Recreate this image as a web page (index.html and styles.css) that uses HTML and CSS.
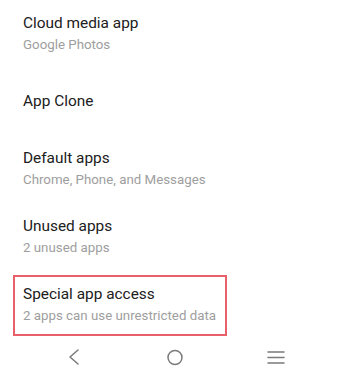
FILE: index.html
```html
<!DOCTYPE html>
<html>
<head>
<meta charset="utf-8">
<link rel="stylesheet" href="styles.css">
</head>
<body>
<div class="screen">
  <div class="list">
    <div class="item two first">
      <div class="title">Cloud media app</div>
      <div class="sub">Google Photos</div>
    </div>
    <div class="item one">
      <div class="title">App Clone</div>
    </div>
    <div class="item two">
      <div class="title">Default apps</div>
      <div class="sub">Chrome, Phone, and Messages</div>
    </div>
    <div class="item two">
      <div class="title">Unused apps</div>
      <div class="sub">2 unused apps</div>
    </div>
    <div class="item two marked">
      <div class="title">Special app access</div>
      <div class="sub">2 apps can use unrestricted data</div>
      <div class="highlight"></div>
    </div>
  </div>
  <div class="navbar">
    <svg class="nav-icon" width="20" height="20" viewBox="0 0 20 20"><polyline points="14,3 6,10 14,17" fill="none" stroke="#7a7a7a" stroke-width="1.5" stroke-linecap="round" stroke-linejoin="round"/></svg>
    <svg class="nav-icon" width="20" height="20" viewBox="0 0 20 20"><circle cx="10" cy="10.5" r="7" fill="none" stroke="#7a7a7a" stroke-width="1.5"/></svg>
    <svg class="nav-icon" width="20" height="20" viewBox="0 0 20 20"><g stroke="#7a7a7a" stroke-width="1.5" stroke-linecap="round"><line x1="2" y1="5" x2="18" y2="5"/><line x1="2" y1="10.5" x2="18" y2="10.5"/><line x1="2" y1="16" x2="18" y2="16"/></g></svg>
  </div>
</div>
</body>
</html>
```

FILE: styles.css
```css
html, body {
  margin: 0;
  padding: 0;
  background: #ffffff;
}
body {
  font-family: Roboto, "Noto Sans", "Liberation Sans", sans-serif;
  width: 350px;
  height: 374px;
  overflow: hidden;
}
.screen {
  display: flex;
  flex-direction: column;
}
.list {
  display: flex;
  flex-direction: column;
  margin-top: -1px;
}
.item {
  position: relative;
  padding: 0 23px;
  box-sizing: border-box;
  display: flex;
  flex-direction: column;
  justify-content: center;
}
.item.two {
  height: 68px;
}
.item.one {
  height: 67px;
}
.title {
  font-size: 15.4px;
  line-height: 22px;
  color: #202020;
}
.sub {
  font-size: 13.3px;
  line-height: 20px;
  margin-top: 1px;
  color: #9e9e9e;
}
.highlight {
  position: absolute;
  left: 13px;
  top: 5px;
  width: 214px;
  height: 61px;
  box-sizing: border-box;
  border: 2px solid #e9606b;
  pointer-events: none;
}
.navbar {
  height: 38px;
  display: flex;
  align-items: center;
  justify-content: center;
  gap: 81px;
}
.nav-icon {
  display: block;
}
```
